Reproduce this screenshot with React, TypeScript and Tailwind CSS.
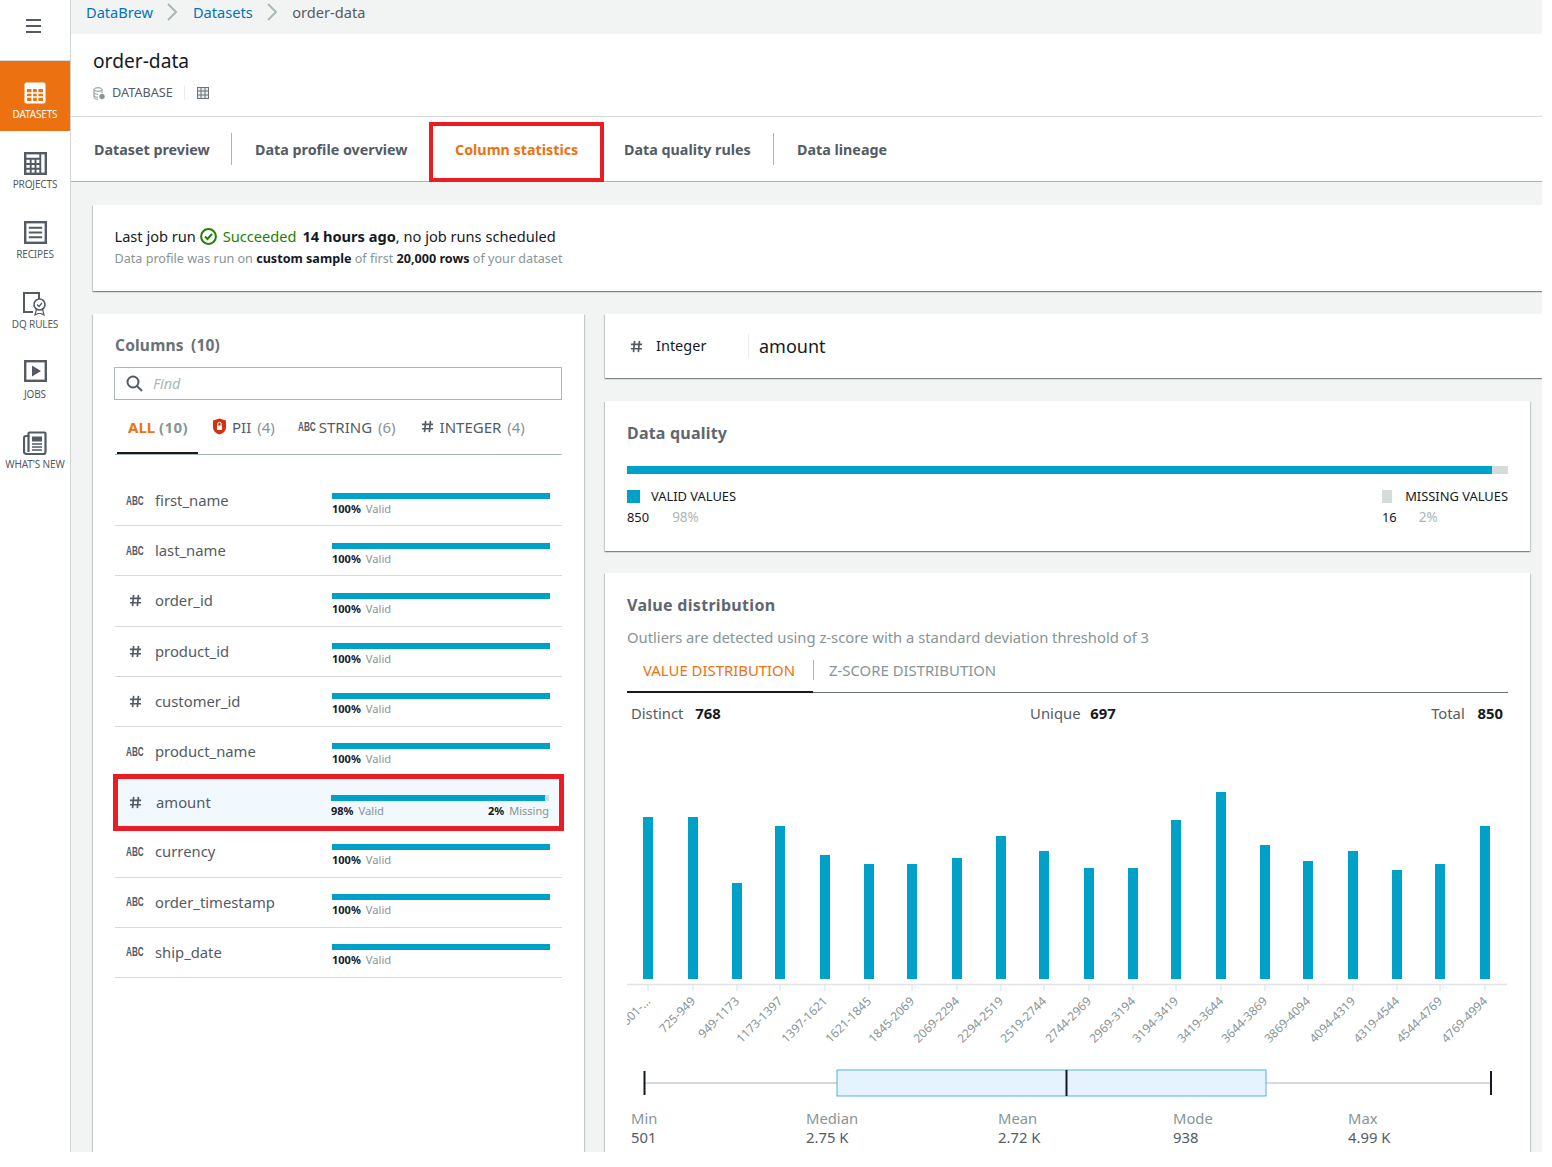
import type { ReactNode } from "react";

const bars = [
  [648, 817], [693, 817], [737, 883], [780, 826], [825, 855], [869, 864], [912, 864], [957, 858], [1001, 836], [1044, 851],
  [1089, 868], [1133, 868], [1176, 820], [1221, 792], [1265, 845], [1308, 861], [1353, 851], [1397, 870], [1440, 864], [1485, 826]
];
const ranges = [
  "501-...", "725-949", "949-1173", "1173-1397", "1397-1621", "1621-1845", "1845-2069", "2069-2294", "2294-2519", "2519-2744",
  "2744-2969", "2969-3194", "3194-3419", "3419-3644", "3644-3869", "3869-4094", "4094-4319", "4319-4544", "4544-4769", "4769-4994"
];
const columns: [string, string][] = [
  ["abc", "first_name"], ["abc", "last_name"], ["num", "order_id"], ["num", "product_id"], ["num", "customer_id"],
  ["abc", "product_name"], ["num", "amount"], ["abc", "currency"], ["abc", "order_timestamp"], ["abc", "ship_date"]
];
const cardShadow = "shadow-[0_1px_1px_0_rgba(0,28,36,0.3),1px_1px_1px_0_rgba(0,28,36,0.15),-1px_1px_1px_0_rgba(0,28,36,0.15)]";

function Abc({ className = "" }: { className?: string }) {
  return <span className={"inline-block w-[18px] origin-left scale-x-[0.68] whitespace-nowrap text-[12px] leading-none font-bold text-[#545b64] font-['Liberation_Sans',sans-serif] " + className}>ABC</span>;
}

function Hash({ size = 14 }: { size?: number }) {
  return (
    <svg width={size} height={size} viewBox="0 0 14 14" fill="none" stroke="#545b64" strokeWidth="1.8">
      <path d="M5 1 3.8 13M10.2 1 9 13M1 4.8h12M1 9.4h12" />
    </svg>
  );
}

function NavItem({ label, active, children }: { label: string; active?: boolean; children: ReactNode }) {
  return (
    <div className={"flex h-[70px] flex-col items-center pt-[21px] " + (active ? "bg-[#ec7211] text-white" : "text-[#545b64]")}>
      <div className="h-[24px]">{children}</div>
      <div className="mt-[1px] text-[10px] leading-[14px] whitespace-nowrap tracking-[-0.15px]">{label}</div>
    </div>
  );
}

function Row({ kind, name }: { kind: string; name: string }) {
  const hot = name === "amount";
  return (
    <div className={"relative flex h-[50.2px] border-b border-[#d5dbdb] " + (hot ? "bg-[#f1f8fe]" : "")}>
      {hot && <div className="absolute -top-[3px] -right-[2px] -bottom-[5px] -left-[2px] border-[5px] border-[#ec1c24]" />}
      <div className={"flex w-[40px] items-center pl-[11px] " + (hot ? "pt-[2px]" : "")}>
        {kind === "abc" ? <Abc /> : <span className="pl-[3px]"><Hash size={13} /></span>}
      </div>
      <div className={"w-[177px] pt-[14px] text-[14.8px] leading-[20px] text-[#545b64] " + (hot ? "pt-[15px] pl-[1px]" : "")}>{name}</div>
      <div className={"w-[218px] " + (hot ? "-ml-px pt-[18px]" : "pt-[16.5px]")}>
        <div className="flex h-[6px] bg-[#d5dbdb]">
          <div className={"h-full bg-[#00a1c9] " + (hot ? "w-[98%]" : "w-full")} />
        </div>
        <div className="mt-[3px] flex justify-between text-[11px] leading-[14px]">
          <span><b className="font-bold text-[#16191f]">{hot ? "98%" : "100%"}</b><span className="ml-[5px] text-[11.2px] text-[#879596]">Valid</span></span>
          {hot && <span><b className="font-bold text-[#16191f]">2%</b><span className="ml-[5px] text-[#879596]">Missing</span></span>}
        </div>
      </div>
    </div>
  );
}

function Stat({ label, value, className = "" }: { label: string; value: string; className?: string }) {
  return (
    <div className={"text-[14.8px] leading-[19px] " + className}>
      <div className="text-[#879596]">{label}</div>
      <div className="text-[#545b64]">{value}</div>
    </div>
  );
}

export default function App() {
  return (
    <div className="h-[1167px] w-[1552px] overflow-hidden bg-white font-['Noto_Sans',sans-serif] text-[#16191f]">
      <div className="flex h-[1152px] w-[1542px] overflow-hidden">
        <aside className="w-[71px] shrink-0 border-r border-[#cfd5d5] bg-white">
          <div className="flex h-[61px] items-start border-b border-[#d5dbdb] pt-[19px] pl-[26px]">
            <svg width="16" height="14" viewBox="0 0 16 14" stroke="#545b64" strokeWidth="2"><path d="M0 1h15M0 7h15M0 13h15" /></svg>
          </div>
          <NavItem label="DATASETS" active>
            <svg width="22" height="22" viewBox="0 0 22 22"><rect x="0.5" y="0.5" width="21" height="21" rx="2" fill="white" /><path d="M3 7h16v12H3z" fill="#ec7211" /><path d="M8.3 7v12M13.6 7v12M3 11h16M3 15h16" stroke="white" strokeWidth="1.6" /></svg>
          </NavItem>
          <NavItem label="PROJECTS">
            <svg width="23" height="23" viewBox="0 0 24 24" fill="none" stroke="#545b64" strokeWidth="2.6"><rect x="1.2" y="1.2" width="21.6" height="21.6" /><path d="M7 7v15M12 7v15M17 1v21M1 7h16M1 12.5h16M1 17.5h16" strokeWidth="2" /></svg>
          </NavItem>
          <NavItem label="RECIPES">
            <svg className="-mt-px" width="23" height="23" viewBox="0 0 24 24" fill="none" stroke="#545b64" strokeWidth="2.6"><rect x="1.2" y="1.2" width="21.6" height="21.6" /><path d="M5 7h14M5 12h14M5 17h14" strokeWidth="2" /></svg>
          </NavItem>
          <NavItem label="DQ RULES">
            <svg width="24" height="24" viewBox="0 0 24 24" fill="none" stroke="#545b64" strokeWidth="1.6"><path d="M10 20H1V1h15v6" strokeWidth="2" /><circle cx="16.5" cy="12.5" r="5.5" /><path d="m14 12.5 2 2 3-3.5M13.5 17l-1.5 6 3-1.5h3l3 1.5-1.5-6" strokeWidth="1.2" /></svg>
          </NavItem>
          <NavItem label="JOBS">
            <svg className="-mt-[2px]" width="23" height="22" viewBox="0 0 23 22" fill="none" stroke="#545b64" strokeWidth="2.4"><rect x="1.2" y="1.2" width="20.6" height="19.6" /><path d="M8 5.500v11l9-5.500z" fill="#545b64" stroke="none" /></svg>
          </NavItem>
          <NavItem label="WHAT'S NEW">
            <svg className="-mt-px" width="24" height="24" viewBox="0 0 24 24" fill="none" stroke="#545b64" strokeWidth="2.2"><path d="M5.500 2.500a1 1 0 0 1 1-1h15a1 1 0 0 1 1 1V21a2 2 0 0 1-2 2H3.500A2.500 2.500 0 0 1 1 20.500V7a2 2 0 0 1 2-2h2.500z" /><path d="M5.500 5v16" /><path d="M9 5.500h10v5H9z" fill="#545b64" stroke="none" /><path d="M9 13h10M9 16h10M9 19h10" strokeWidth="1.6" /></svg>
          </NavItem>
        </aside>

        <main className="min-w-0 flex-1 bg-[#f2f3f3]">
          <nav className="flex h-[34px] items-start pt-[2px] pl-[15px] text-[14.6px] leading-[20px]">
            <span className="text-[#0073bb]">DataBrew</span>
            <svg className="mx-[14.5px] mt-[1px]" width="11" height="18" viewBox="0 0 11 18" fill="none" stroke="#aab7b8" strokeWidth="2"><path d="m1 1 8 8-8 8" /></svg>
            <span className="text-[#0073bb]">Datasets</span>
            <svg className="mr-[14px] ml-[14.5px] mt-[1px]" width="11" height="18" viewBox="0 0 11 18" fill="none" stroke="#aab7b8" strokeWidth="2"><path d="m1 1 8 8-8 8" /></svg>
            <span className="text-[#545b64]">order-data</span>
          </nav>

          <header className="h-[83px] border-b border-[#d5dbdb] bg-white pt-[13px] pl-[22px]">
            <div className="text-[19.2px] leading-[27px] text-[#16191f]">order-data</div>
            <div className="mt-[11px] flex h-[16px] items-center text-[12.7px] text-[#545b64]">
              <svg width="12" height="13" viewBox="0 0 12 13" fill="none" stroke="#879596" strokeWidth="1"><ellipse cx="5" cy="2.5" rx="4" ry="1.8" /><path d="M1 2.5v8c0 1 1.8 1.8 4 1.8M9 2.5V6M1 5.500c0 1 1.800 1.800 4 1.800M1 8.500c0 1 1.800 1.800 4 1.800" /><circle cx="9" cy="9.500" r="2.300" fill="#879596" /></svg>
              <span className="ml-[7px]">DATABASE</span>
              <span className="mx-[11.5px] h-[14px] w-px bg-[#eaeded]" />
              <svg width="12" height="12" viewBox="0 0 12 12" fill="#eaeded" stroke="#687078" strokeWidth="1"><rect x="0.5" y="0.500" width="11" height="11" /><path d="M4 .5v11M8 .5v11M.5 4h11M.5 8h11" /></svg>
            </div>
          </header>

          <div className="flex h-[65px] items-stretch border-b border-[#aab7b8] bg-white text-[14.3px] leading-[20px] font-bold text-[#545b64]">
            <div className="flex items-center pt-[2px] pl-[23px]"><span className="w-[137px]">Dataset preview</span></div>
            <div className="my-[16px] w-px bg-[#aab7b8]" />
            <div className="flex w-[197px] items-center pt-[2px] pl-[23px]">Data profile overview</div>
            <div className="relative z-10 mt-[5px] -mb-[1px] flex w-[175px] items-center border-[4px] border-[#ec1c24] pb-[4px] pl-[22px] text-[#ec7211]">Column statistics</div>
            <div className="flex w-[169px] items-center pt-[2px] pl-[20px]">Data quality rules</div>
            <div className="my-[16px] w-px bg-[#aab7b8]" />
            <div className="flex items-center pt-[2px] pl-[23px]">Data lineage</div>
          </div>

          <div className="pt-[23px] pl-[22px]">
            <section className={"h-[86px] bg-white pt-[21px] pl-[21.5px] " + cardShadow}>
              <div className="flex items-center text-[14.6px] leading-[20px] text-[#16191f]">
                <span>Last job run</span>
                <svg className="mr-[6px] ml-[4px]" width="17" height="17" viewBox="0 0 17 17" fill="none" stroke="#1d8102" strokeWidth="2"><circle cx="8.500" cy="8.500" r="7.400" /><path d="m5 8.500 2.500 2.500 4.500-5" /></svg>
                <span className="text-[#1d8102]">Succeeded</span>
                <b className="ml-[6px] font-bold">14 hours ago</b>
                <span>, no job runs scheduled</span>
              </div>
              <div className="mt-[3px] text-[12.6px] leading-[20px] text-[#879596]">
                Data profile was run on <b className="font-bold text-[#16191f]">custom sample</b> of first <b className="font-bold text-[#16191f]">20,000 rows</b> of your dataset
              </div>
            </section>

            <div className="mt-[23px] flex gap-[21px]">
              <section className={"h-[900px] w-[491px] shrink-0 bg-white px-[22px] pt-[21px] " + cardShadow}>
                <div className="text-[15.5px] leading-[20px] font-bold tracking-[0.2px] text-[#687078]">Columns <span className="ml-[3px]">(10)</span></div>
                <div className="mt-[12px] -ml-px flex h-[33px] items-center border border-[#aab7b8] pl-[11px]">
                  <svg width="17" height="17" viewBox="0 0 17 17" fill="none" stroke="#545b64" strokeWidth="2"><circle cx="7" cy="7" r="5.500" /><path d="m11 11 5 5" /></svg>
                  <span className="ml-[10px] text-[14.5px] text-[#aab7b8] italic">Find</span>
                </div>
                <div className="relative flex h-[55px] items-start border-b border-[#aab7b8] pt-[17px] text-[15px] leading-[20px] text-[#545b64]">
                  <div className="absolute bottom-0 left-[2px] h-[2px] w-[81px] bg-[#16191f]" />
                  <span className="ml-[13px] font-bold text-[#ec7211]">ALL <span className="font-bold tracking-[0.4px] text-[#879596]">(10)</span></span>
                  <svg className="mt-[1px] ml-[24px]" width="15" height="17" viewBox="0 0 15 17"><path d="M7.500 0.500 14 2.500V9c0 4-3 6.500-6.500 7.500C4 15.500 1 13 1 9V2.500z" fill="#d13212" /><path d="M5 7.500h5V12H5z" fill="white" /><path d="M5.800 7.500V6a1.700 1.700 0 0 1 3.400 0v1.500" fill="none" stroke="white" /></svg>
                  <span className="ml-[5px]">PII <span className="ml-[2px] text-[#879596]">(4)</span></span>
                  <Abc className="mt-[4px] ml-[23px]" />
                  <span className="ml-[3px]">STRING <span className="ml-[2px] text-[#879596]">(6)</span></span>
                  <span className="mt-[3px] ml-[25px]"><Hash size={13} /></span>
                  <span className="ml-[6px]">INTEGER <span className="ml-[2px] text-[#879596]">(4)</span></span>
                </div>
                <div className="pt-[21px]">
                  {columns.map(([kind, name]) => <Row key={name} kind={kind} name={name} />)}
                </div>
              </section>

              <div className="min-w-0 flex-1">
                <section className={"flex h-[64px] items-center bg-white pl-[25px] " + cardShadow}>
                  <Hash size={13} />
                  <span className="ml-[13px] w-[92px] text-[14.5px] text-[#16191f]">Integer</span>
                  <span className="mr-[10px] h-[24px] w-px bg-[#eaeded]" />
                  <span className="text-[18px] text-[#16191f]">amount</span>
                </section>

                <section className={"mt-[23px] mr-[12px] h-[150px] bg-white px-[22px] pt-[21px] " + cardShadow}>
                  <div className="text-[16px] leading-[22px] font-bold tracking-[0.2px] text-[#5f6670]">Data quality</div>
                  <div className="mt-[22px] flex h-[8px] bg-[#d5dbdb]"><div className="w-[98.2%] bg-[#00a1c9]" /></div>
                  <div className="mt-[13px] flex justify-between text-[12.9px] leading-[18px]">
                    <div>
                      <div className="flex items-center text-[#16191f]"><span className="mr-[11px] h-[13px] w-[13px] bg-[#00a1c9]" />VALID VALUES</div>
                      <div className="mt-[3px] text-[#16191f]">850<span className="ml-[23px] text-[13.500px] text-[#aab7b8]">98%</span></div>
                    </div>
                    <div className="w-[126px]">
                      <div className="flex items-center whitespace-nowrap text-[#16191f]"><span className="mr-[13px] h-[13px] w-[13px] bg-[#d5dbdb]" />MISSING VALUES</div>
                      <div className="mt-[3px] text-[#16191f]">16<span className="ml-[22px] text-[13.500px] text-[#aab7b8]">2%</span></div>
                    </div>
                  </div>
                </section>

                <section className={"mt-[22px] mr-[12px] h-[700px] bg-white px-[22px] pt-[21px] " + cardShadow}>
                  <div className="text-[16px] leading-[22px] font-bold tracking-[0.3px] text-[#5f6670]">Value distribution</div>
                  <div className="mt-[11px] text-[14.8px] leading-[20px] text-[#879596]">Outliers are detected using z-score with a standard deviation threshold of 3</div>
                  <div className="relative mt-[6px] flex h-[40px] items-start border-b border-[#687078] pt-[7px] text-[14.9px] leading-[20px]">
                    <div className="absolute -bottom-px left-0 h-[2px] w-[186px] bg-[#16191f]" />
                    <span className="w-[186px] pl-[16px] text-[#ec7211]">VALUE DISTRIBUTION</span>
                    <span className="h-[20px] w-px bg-[#aab7b8]" />
                    <span className="pl-[15px] text-[#879596]">Z-SCORE DISTRIBUTION</span>
                  </div>
                  <div className="mt-[10px] flex justify-between px-[4px] text-[14.8px] leading-[20px] text-[#545b64]">
                    <span>Distinct <b className="ml-[8px] font-bold text-[#16191f]">768</b></span>
                    <span className="mr-[6px]">Unique <b className="ml-[6px] font-bold text-[#16191f]">697</b></span>
                    <span className="pr-[1px]">Total <b className="ml-[9px] font-bold text-[#16191f]">850</b></span>
                  </div>
                  <svg className="mt-[4px] block" width="881" height="339" viewBox="627 727 881 339">
                    <defs><clipPath id="axis"><rect x="627" y="727" width="881" height="339" /></clipPath></defs>
                    {bars.map(([x, top]) => <rect key={x} x={x - 5} y={top} width="10" height={979 - top} fill="#00a1c9" />)}
                    <path d="M627 984.500h880" stroke="#e1e4ea" strokeWidth="1.500" />
                    <g clipPath="url(#axis)">
                      {bars.map(([x], i) => (
                        <g key={x}>
                          <path d={`M${x} 985v6`} stroke="#d5dcef" />
                          <text x={x + 3} y={1002} transform={`rotate(-45 ${x + 3} 1002)`} textAnchor="end" fontSize="12" fill="#879596">{ranges[i]}</text>
                        </g>
                      ))}
                    </g>
                  </svg>
                  <svg className="block" width="881" height="34" viewBox="627 1066 881 34">
                    <path d="M645 1083h846" stroke="#d5dbdb" strokeWidth="2" />
                    <rect x="837" y="1070" width="429" height="26" fill="#e6f2fd" stroke="#4eb6d6" strokeWidth="1" />
                    <path d="M644.500 1071v24M1066.500 1070v26M1491 1071v24" stroke="#16191f" strokeWidth="2" />
                  </svg>
                  <div className="mt-[9px] flex pl-[4px]">
                    <Stat className="w-[175px]" label="Min" value="501" />
                    <Stat className="w-[192px]" label="Median" value="2.75 K" />
                    <Stat className="w-[175px]" label="Mean" value="2.72 K" />
                    <Stat className="w-[175px]" label="Mode" value="938" />
                    <Stat label="Max" value="4.99 K" />
                  </div>
                </section>
              </div>
            </div>
          </div>
        </main>
      </div>
    </div>
  );
}
